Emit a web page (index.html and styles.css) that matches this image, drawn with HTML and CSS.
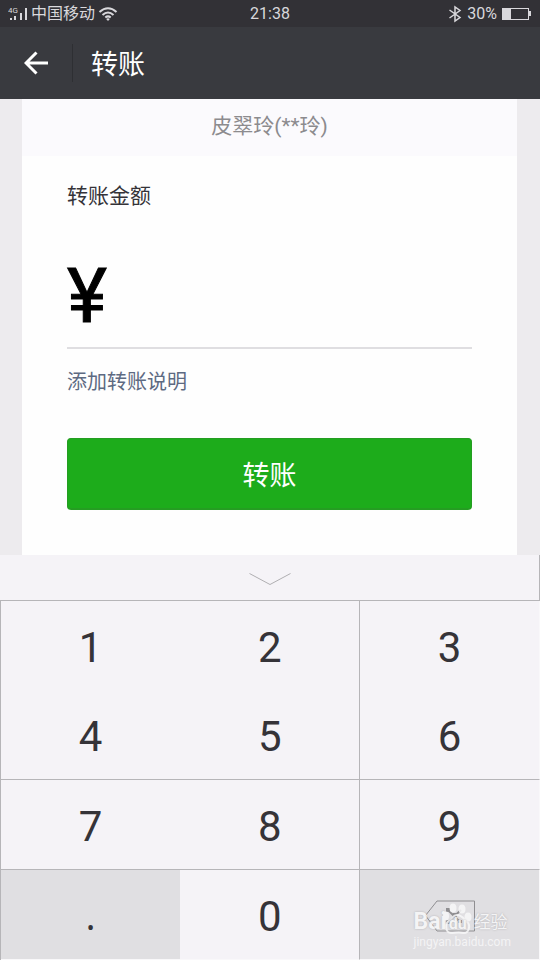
FILE: index.html
```html
<!DOCTYPE html>
<html lang="zh-CN">
<head>
<meta charset="utf-8">
<meta name="viewport" content="width=device-width, initial-scale=1">
<title>转账</title>
<link rel="stylesheet" href="styles.css">
</head>
<body>
<div class="status">
  <div class="status-side">
    <svg class="signal" width="20" height="18" viewBox="0 0 20 18" aria-hidden="true">
      <text class="signal-type" x="0" y="8">4G</text>
      <path d="M2 13h2v2H2zM6 11h2v4H6zM12 8h2v7h-2zM17 3h2v12h-2z"/>
    </svg>
    <span>中国移动</span>
    <svg class="wifi" width="20" height="16" viewBox="0 0 20 16" aria-hidden="true">
      <path d="M1.500 6Q10-1.500 18.500 6M4.500 9Q10 4 15.500 9M7.300 11.500Q10 9.300 12.700 11.500"/>
      <path class="solid" d="M8.200 13Q10 11.600 11.800 13L10 15z"/>
    </svg>
  </div>
  <time>21:38</time>
  <div class="status-side status-end">
    <svg class="bluetooth" width="14" height="18" viewBox="0 0 14 18" aria-hidden="true">
      <path d="M1.500 5L12 12.500 7 16V2l5 3.500L1.500 13"/>
    </svg>
    <span class="charge">30%</span>
    <svg class="battery" width="30" height="14" viewBox="0 0 30 14" aria-hidden="true">
      <rect x=".5" y="1.500" width="26" height="11"/>
      <path class="solid" d="M0 1h9v12H0zM27 4h2v5h-2z"/>
    </svg>
  </div>
</div>
<header class="bar">
  <button class="back" type="button" aria-label="返回">
    <svg width="24" height="24" viewBox="0 0 24 24" aria-hidden="true"><path d="M24 12H2M12.500 1.500L2 12l10.500 10.500"/></svg>
  </button>
  <h1>转账</h1>
</header>
<main>
  <form class="card">
    <p class="payee">皮翠玲(**玲)</p>
    <div class="body">
      <label class="caption" for="amount">转账金额</label>
      <div class="amount">
        <span class="yen">¥</span>
        <input id="amount" type="text" inputmode="none" autocomplete="off">
      </div>
      <a class="note" href="#">添加转账说明</a>
      <button class="submit" type="button">转账</button>
    </div>
  </form>
</main>
<section class="keyboard" aria-label="数字键盘">
  <button class="collapse" type="button" aria-label="收起键盘">
    <svg width="42" height="14" viewBox="0 0 42 14" aria-hidden="true"><path d="M.5 1.500L21 12.500l20.500-11"/></svg>
  </button>
  <div class="keys">
    <div class="group double">
      <button type="button">1</button>
      <button type="button">2</button>
      <button type="button">4</button>
      <button type="button">5</button>
    </div>
    <div class="group single">
      <button type="button">3</button>
      <button type="button">6</button>
    </div>
    <div class="group double">
      <button type="button">7</button>
      <button type="button">8</button>
    </div>
    <div class="group single">
      <button type="button">9</button>
    </div>
    <div class="group double">
      <button class="dark point" type="button">.</button>
      <button type="button">0</button>
    </div>
    <div class="group single">
      <button class="dark" type="button" aria-label="删除">
        <svg class="erase" width="52" height="32" viewBox="0 0 52 32" aria-hidden="true">
          <path d="M13 1h37.500v30H13L1.500 15.500z"/>
          <path class="cross" d="M24 10l12 12M37 10L24 22"/>
          <path class="knob" d="M22 8h4v4h-4zM22 20h4v4h-4zM29 13h4v5h-4zM34 20h4v3h-4z"/>
        </svg>
      </button>
    </div>
  </div>
  <div class="mark">
    <div class="mark-logo">
      <span class="mark-latin">Bai</span>
      <span class="mark-paw">
        <svg width="32" height="32" viewBox="0 0 32 32" aria-hidden="true">
          <ellipse cx="4" cy="13" rx="3" ry="4.500"/>
          <ellipse cx="11" cy="5" rx="3.500" ry="4.500"/>
          <ellipse cx="20" cy="6" rx="3.500" ry="4.500"/>
          <ellipse cx="26" cy="14" rx="3.500" ry="4.500"/>
          <path class="pad" d="M15 12c-4 0-4 3-8 6-4 2-4 12 2 12 4 0 8-1 12 0 6 1 8-8 4-11-4-4-5-7-10-7z"/>
        </svg>
        <span class="mark-du">du</span>
      </span>
      <span class="mark-han">经验</span>
    </div>
    <div class="mark-site">jingyan.baidu.com</div>
  </div>
</section>
</body>
</html>
```
FILE: styles.css
```css
* {
  box-sizing: border-box;
}

body {
  margin: 0;
  min-height: 100vh;
  display: flex;
  flex-direction: column;
  background: #edebee;
  color: #353338;
  font-family: Roboto, "Noto Sans CJK SC", sans-serif;
  font-weight: 400;
}

button,
input {
  margin: 0;
  padding: 0;
  border: 0;
  background: none;
  color: inherit;
  font: inherit;
}

svg {
  display: block;
  fill: none;
}

/* Status bar */
.status {
  display: flex;
  align-items: center;
  height: 27px;
  padding: 0 8px;
  background: #323136;
  color: #d9d8dc;
  font-size: 16px;
  line-height: 27px;
}

.status-side {
  flex: 1;
  display: flex;
  align-items: center;
  gap: 3px;
}

.status-end {
  justify-content: flex-end;
  gap: 5px;
}

.signal,
.solid {
  fill: #d9d8dc;
}

.signal-type {
  font-size: 8px;
}

.wifi,
.bluetooth,
.battery {
  stroke: #d9d8dc;
}

.bluetooth {
  stroke-width: 1.5;
}

.wifi {
  stroke-width: 2;
}

.solid {
  stroke: none;
}

/* Title bar */
.bar {
  display: flex;
  align-items: center;
  height: 72px;
  background: #393a3f;
  color: #fff;
}

.back {
  display: flex;
  align-items: center;
  justify-content: center;
  width: 73px;
  height: 38px;
  border-right: 1px solid #2e2f33;
}

.back svg {
  stroke: #fff;
  stroke-width: 3;
}

h1 {
  margin: 0 0 0 18px;
  padding-top: 4px;
  font-size: 27px;
  font-weight: 400;
  line-height: 40px;
}

/* Transfer form */
main {
  flex: 1;
  display: flex;
  padding: 0 23px 0 22px;
}

.card {
  flex: 1;
  min-width: 0;
  background: #fefefe;
}

.payee {
  margin: 0;
  padding: 12px 0 15px;
  background: #fbfafd;
  color: #8c8b8e;
  font-size: 21px;
  line-height: 30px;
  text-align: center;
}

.body {
  display: flex;
  flex-direction: column;
  padding: 25px 45px 45px;
}

.caption {
  font-size: 21px;
  line-height: 30px;
}

.amount {
  display: flex;
  align-items: center;
  height: 138px;
  padding-top: 34px;
  border-bottom: 2px solid #dfdee1;
  color: #000;
  font-size: 76px;
  line-height: 80px;
}

.yen {
  font-weight: 400;
  -webkit-text-stroke: 1px #000;
}

.amount input {
  flex: 1;
  min-width: 0;
  height: 80px;
  outline: 0;
}

.note {
  align-self: flex-start;
  margin-top: 18px;
  color: #5d6a82;
  font-size: 20px;
  line-height: 30px;
  text-decoration: none;
}

.submit {
  height: 72px;
  margin-top: 41px;
  border: 1px solid #259d22;
  border-bottom-width: 2px;
  border-radius: 4px;
  background: #1dac1b;
  color: #fff;
  font-size: 27px;
}

/* Numeric keyboard */
.keyboard {
  position: relative;
  background: #f5f3f7;
}

.collapse {
  display: flex;
  align-items: center;
  justify-content: center;
  width: 100%;
  height: 45px;
  padding-top: 3px;
  border-right: 1px solid #b6b5b8;
}

.collapse svg {
  stroke: #b0afb2;
}

.keys {
  display: grid;
  grid-template-columns: 2fr 1fr;
  border-top: 1px solid #b6b5b8;
  border-left: 1px solid #b6b5b8;
}

.group {
  display: grid;
  border-right: 1px solid #b6b5b8;
  border-bottom: 1px solid #b6b5b8;
}

.double {
  grid-template-columns: 1fr 1fr;
}

.single {
  border-right-color: #f9f8fa;
}

.group:nth-last-child(-n + 2) {
  border-bottom-color: #f9f8fa;
}

.keys button {
  display: flex;
  align-items: center;
  justify-content: center;
  height: 89px;
  padding-top: 3px;
  font-size: 42px;
}

.keys .dark {
  background: #e0dfe2;
}

.keys .point {
  font-family: "Noto Sans", sans-serif;
  font-size: 36px;
}

.erase {
  stroke: #8f8e91;
}

.erase .cross {
  stroke-width: 2;
}

.erase .knob {
  fill: #8f8e91;
  stroke: none;
}

/* Site mark over the keyboard corner */
.mark {
  position: absolute;
  right: 29px;
  bottom: 11px;
  color: #f8f8f9;
  opacity: 0.85;
  pointer-events: none;
}

.mark-logo {
  display: flex;
  align-items: flex-end;
  height: 35px;
  line-height: 26px;
  text-shadow: 0 0 2px #a5a4a7;
}

.mark-latin {
  font-size: 23px;
  font-weight: 700;
}

.mark-paw {
  position: relative;
  margin-left: -5px;
}

.mark-paw svg {
  fill: #f8f8f9;
}

.mark-paw .pad {
  fill: none;
  stroke: #f8f8f9;
  stroke-width: 2;
}

.mark-du {
  position: absolute;
  inset: auto 0 0;
  font-size: 16px;
  font-weight: 700;
  line-height: 22px;
  text-align: center;
}

.mark-han {
  font-size: 17px;
}

.mark-site {
  font-size: 12px;
  line-height: 14px;
}
```
